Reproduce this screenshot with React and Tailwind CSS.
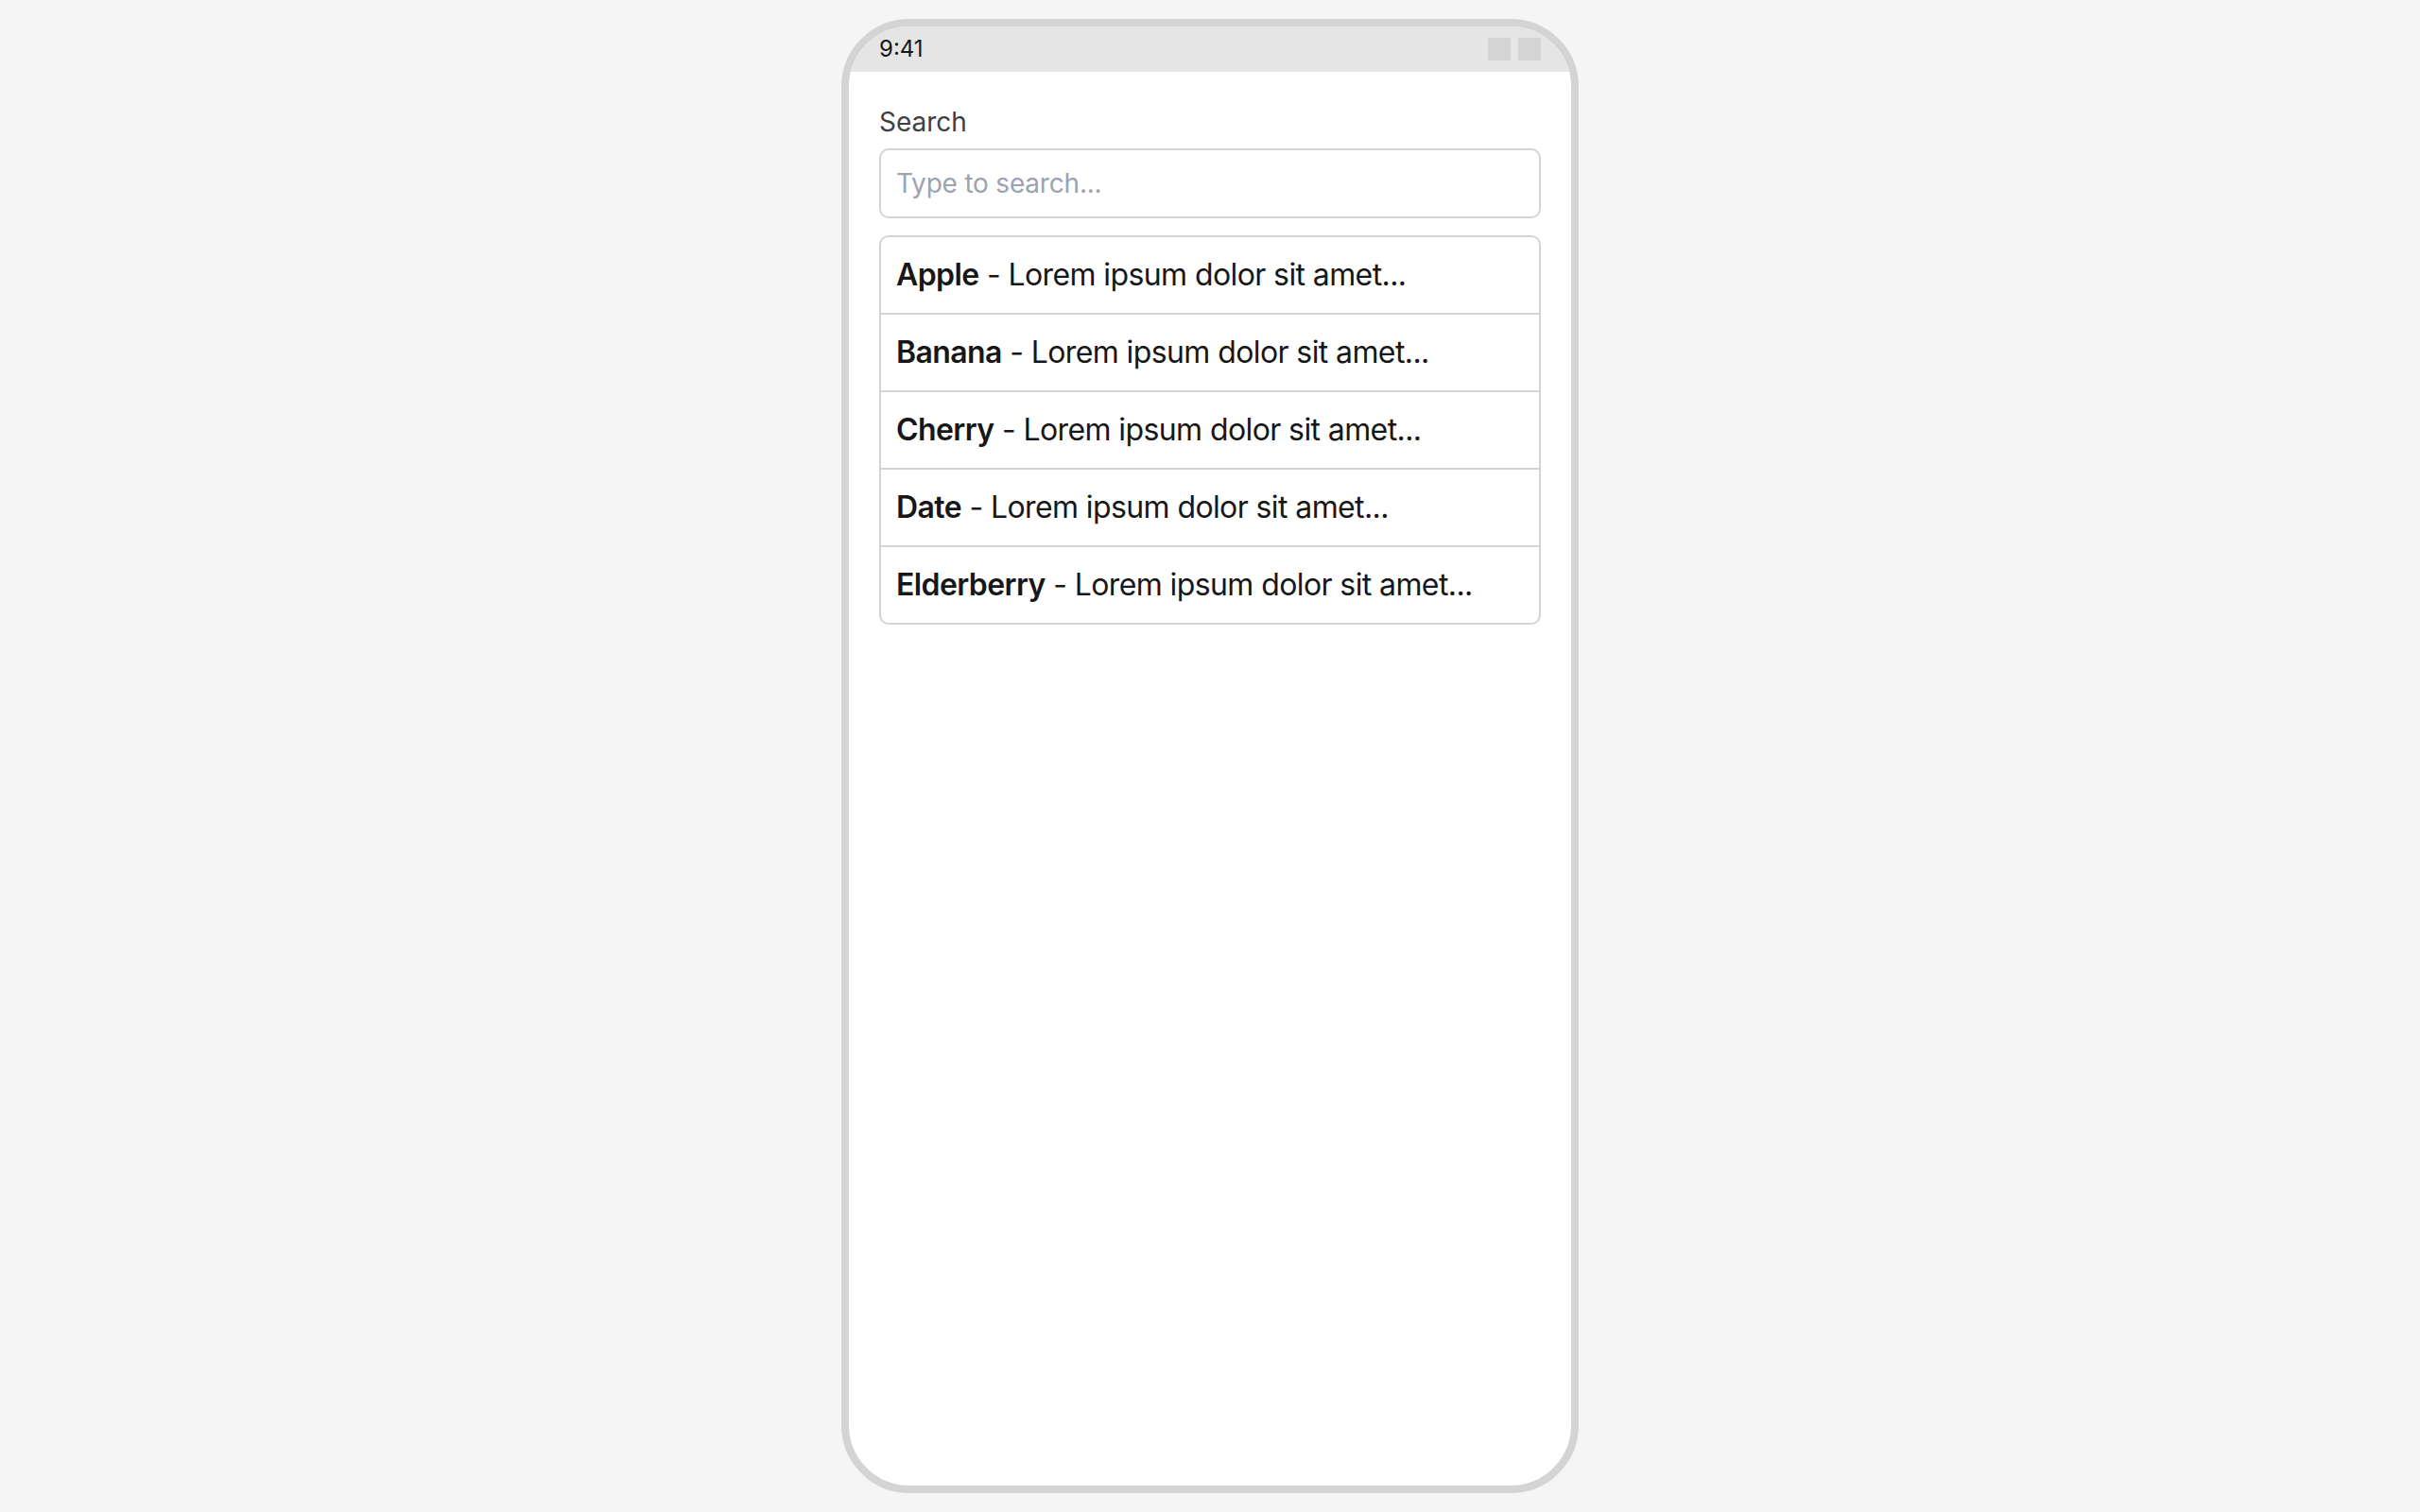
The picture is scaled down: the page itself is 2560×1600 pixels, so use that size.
import React, { useState } from 'react';

const fruits = ['Apple', 'Banana', 'Cherry', 'Date', 'Elderberry'];

export default function App() {
    const [query, setQuery] = useState('');

    const results = fruits.filter(f => f.toLowerCase().includes(query.toLowerCase()));

    return (
        <div className="min-h-screen bg-[#f5f5f5] flex justify-center py-5 font-['Inter',_'Liberation_Sans',_sans-serif]">
            {/* Phone frame */}
            <div className="w-[780px] h-[1560px] bg-white border-[8px] border-[#d4d4d4] rounded-[72px] overflow-hidden flex flex-col">
                {/* Status bar */}
                <div className="h-12 bg-[#e5e5e5] px-8 flex items-center justify-between shrink-0">
                    <span className="text-[24px] leading-none text-[#171717]">9:41</span>
                    <div className="flex gap-2">
                        <div className="w-6 h-6 bg-[#d4d4d4]"></div>
                        <div className="w-6 h-6 bg-[#d4d4d4]"></div>
                    </div>
                </div>

                <div className="px-8 pt-8">
                    <label className="block text-[28px] leading-[42px] text-[#404040] mb-[7px]">Search</label>
                    <input
                        type="text"
                        value={query}
                        onChange={e => setQuery(e.target.value)}
                        placeholder="Type to search..."
                        className="w-full px-4 py-3.5 text-[28px] leading-[42px] tracking-[-0.2px] text-[#171717] placeholder:text-[#9ca3af] border-2 border-[#d4d4d4] rounded-[10px] outline-none"
                    />

                    <ul className="mt-[18px] border-2 border-[#d4d4d4] rounded-[10px] divide-y-2 divide-[#d4d4d4] overflow-hidden">
                        {results.map(name => (
                            <li key={name} className="px-4 py-4 text-[32px] leading-[48px] tracking-[-0.6px] text-[#171717]">
                                <span className="font-semibold">{name}</span> - Lorem ipsum dolor sit amet...
                            </li>
                        ))}
                    </ul>
                </div>
            </div>
        </div>
    );
}
